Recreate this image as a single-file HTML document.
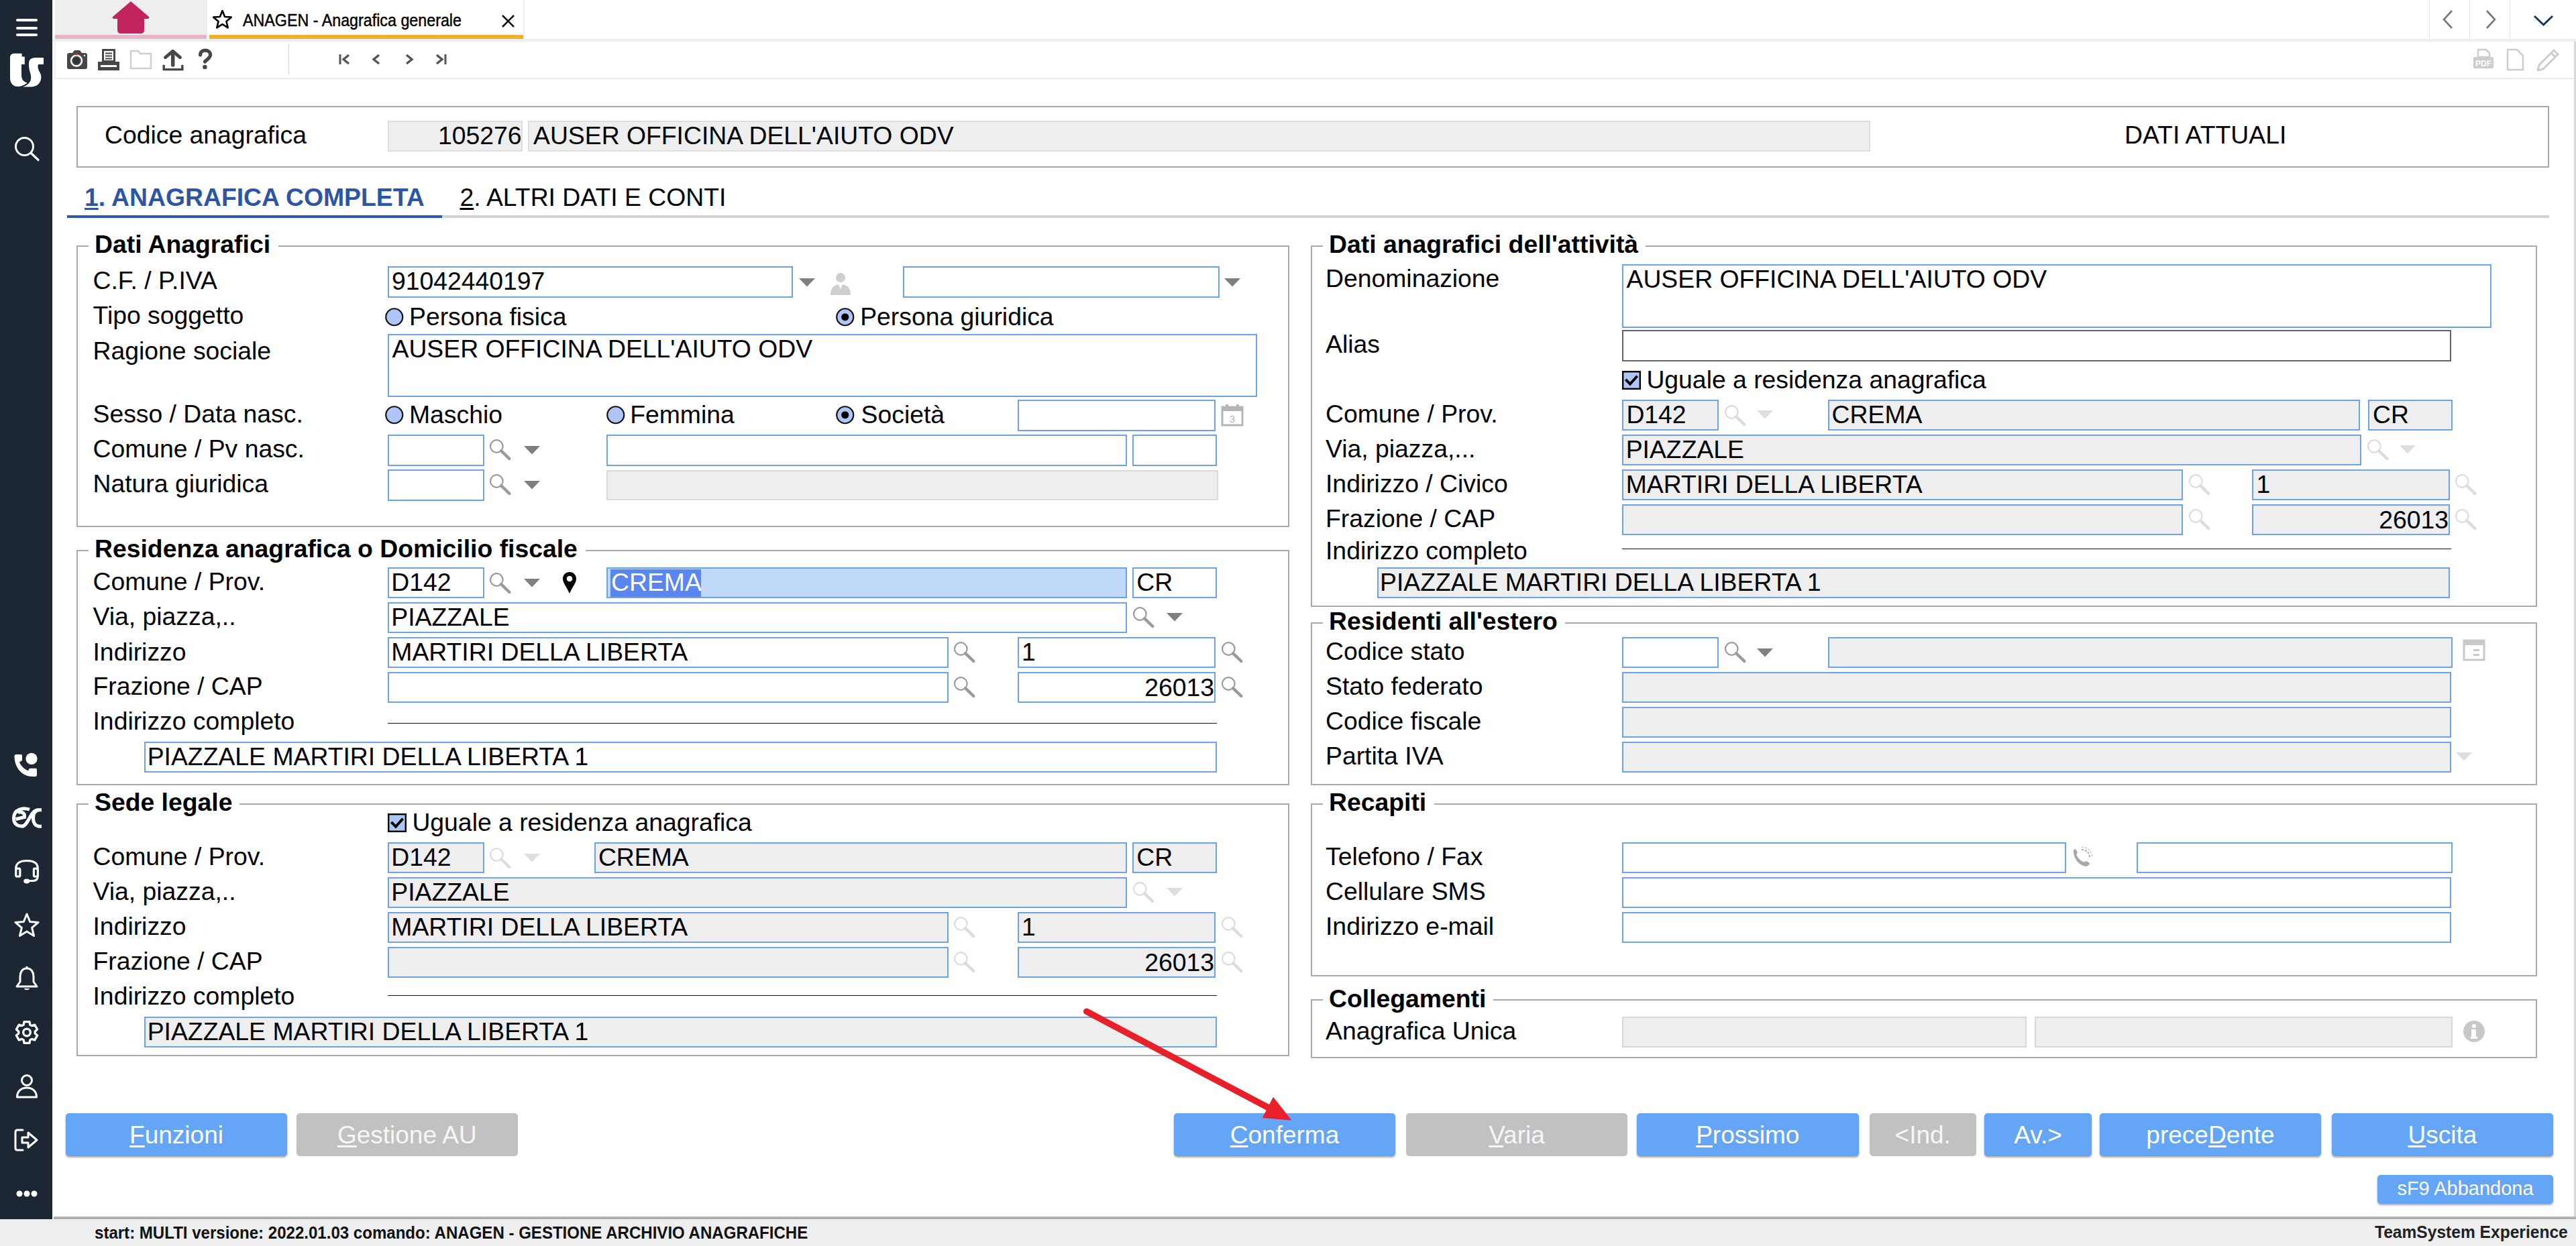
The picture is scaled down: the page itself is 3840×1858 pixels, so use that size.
<!DOCTYPE html>
<html><head><meta charset="utf-8"><title>ANAGEN - Anagrafica generale</title>
<style>
html,body{margin:0;padding:0;}
body{width:3840px;height:1858px;position:relative;overflow:hidden;background:#fff;font-family:"Liberation Sans",sans-serif;}
body>div,body>svg{position:absolute;}
.t{white-space:pre;}
</style></head><body>
<div style="left:0px;top:0px;width:78px;height:1818px;background:#1d2734"></div>
<div style="left:24px;top:28px;width:32px;height:4px;background:#fff;border-radius:2px"></div>
<div style="left:24px;top:39.5px;width:32px;height:4.0px;background:#fff;border-radius:2px"></div>
<div style="left:24px;top:50px;width:32px;height:4px;background:#fff;border-radius:2px"></div>
<svg style="left:10px;top:72px;width:60px;height:64px" viewBox="0 0 60 64"><path d="M 5,14 C 5,9.5 7.5,7.7 12,7.7 L 22.6,7.7 L 22.6,12.5 L 26.8,12.5 L 26.8,24 L 22,24 L 22,40 C 22,46 25,50 30.5,51.5 C 27,55 21,57 16,57 C 9,57 5,51 5,44 Z" fill="#fff"/><path d="M 33,22.5 C 33,16 37.5,14 44,14 L 55,14 L 55,24 L 47,24 C 46,27.5 46.5,31 49.5,36 C 52,41 52,45 50,49.5 C 47,55.5 42,57.5 35,57.5 L 24,57.5 C 30,55.5 35,52 36,46 C 37,41 35,37 33.8,32 C 33,28 33,25.5 33,22.5 Z" fill="#fff"/></svg>
<svg style="left:20px;top:201px;width:40px;height:40px" viewBox="0 0 40 40"><circle cx="16.5" cy="17.5" r="13" fill="none" stroke="#fff" stroke-width="3"/><line x1="26" y1="27" x2="37" y2="37.5" stroke="#fff" stroke-width="3.2" stroke-linecap="round"/></svg>
<svg style="left:18px;top:1122px;width:40px;height:40px" viewBox="0 0 40 40"><path d="M 3.5,5.5 C 3.5,4 4.5,3 6,3 L 13,3 C 14.2,3 15,3.8 15,5 L 15,11 C 15,12 14.4,12.6 13.5,13 L 11,14.2 C 13,20 18,25 24,27.2 L 25.2,25 C 25.6,24.2 26.2,23.8 27.2,23.8 L 35,23.8 C 36.2,23.8 37,24.6 37,25.8 L 37,33.5 C 37,35 36,36 34.5,36 L 31,36 C 15,36 3.5,23 3.5,5.5 Z" fill="#fff"/><circle cx="29" cy="9.4" r="8.6" fill="#fff"/></svg>
<svg style="left:14px;top:1200px;width:52px;height:40px" viewBox="0 0 52 40"><g fill="none" stroke="#fff" stroke-width="5"><path d="M 30,7.2 C 20,3.5 6.5,7 6.5,20 C 6.5,29.5 13,32.5 21,32"/><path d="M 9.5,21.5 L 22.5,18.5 C 23.5,10.5 15,9.5 12.5,12.5"/><path d="M 19,32.3 C 29,30.5 31,7.8 43,7.8 L 48,7.8"/><path d="M 43,7.8 C 37,9.5 35.5,15 35.5,20 C 35.5,27 39,32.2 45,32.2 L 48,32.2"/></g></svg>
<svg style="left:14px;top:1274px;width:52px;height:52px" viewBox="0 0 52 52"><g fill="none" stroke="#fff" stroke-width="3.2"><path d="M 9.7,21 C 9.7,13 16,9.5 26,9.5 C 36,9.5 42.3,13 42.3,21"/><rect x="9.75" y="21.2" width="6.1" height="11.8" rx="1.5"/><rect x="36.4" y="21.2" width="6" height="11.8" rx="1.5"/><path d="M 42.3,32 C 42.3,37 40,39.5 35,39.5 L 27,39.5"/></g><ellipse cx="25.8" cy="40" rx="4.6" ry="3.4" fill="#fff"/></svg>
<svg style="left:20px;top:1360px;width:40px;height:40px" viewBox="0 0 40 40"><polygon points="20.00,3.00 24.70,14.53 37.12,15.44 27.61,23.47 30.58,35.56 20.00,29.00 9.42,35.56 12.39,23.47 2.88,15.44 15.30,14.53" fill="none" stroke="#fff" stroke-width="3" stroke-linejoin="round"/></svg>
<svg style="left:22px;top:1440px;width:36px;height:40px" viewBox="0 0 36 40"><path d="M18,4 C11,4 8,10 8,16 L8,24 L3,31 L33,31 L28,24 L28,16 C28,10 25,4 18,4 Z" fill="none" stroke="#fff" stroke-width="3" stroke-linejoin="round"/><path d="M14,34 C14,37 22,37 22,34 Z" fill="#fff"/><line x1="18" y1="1" x2="18" y2="4" stroke="#fff" stroke-width="3"/></svg>
<svg style="left:14px;top:1514px;width:52px;height:52px" viewBox="0 0 52 52"><polygon points="21.19,14.18 22.06,9.68 29.94,9.68 30.81,14.18 33.40,15.68 37.73,14.18 41.67,21.01 38.21,24.00 38.21,27.00 41.67,29.99 37.73,36.82 33.40,35.32 30.81,36.82 29.94,41.32 22.06,41.32 21.19,36.82 18.60,35.32 14.27,36.82 10.33,29.99 13.79,27.00 13.79,24.00 10.33,21.01 14.27,14.18 18.60,15.68" fill="none" stroke="#fff" stroke-width="3.3" stroke-linejoin="round"/><circle cx="26" cy="25.5" r="5.3" fill="none" stroke="#fff" stroke-width="3.3"/></svg>
<svg style="left:22px;top:1601px;width:36px;height:40px" viewBox="0 0 36 40"><circle cx="18" cy="10" r="7.5" fill="none" stroke="#fff" stroke-width="3"/><path d="M3.5,35 C3.5,26 10,21 18,21 C26,21 32.5,26 32.5,35 Z" fill="none" stroke="#fff" stroke-width="3" stroke-linejoin="round"/></svg>
<svg style="left:20px;top:1682px;width:40px;height:36px" viewBox="0 0 40 36"><path d="M14,3 L6,3 C4,3 3,4 3,6 L3,30 C3,32 4,33 6,33 L14,33" fill="none" stroke="#fff" stroke-width="3" stroke-linecap="round"/><path d="M13,14 L22,14 L22,7 L35,18 L22,29 L22,22 L13,22 Z" fill="none" stroke="#fff" stroke-width="3" stroke-linejoin="round"/></svg>
<svg style="left:24px;top:1775px;width:10px;height:10px" viewBox="0 0 10 10"><circle cx="5" cy="5" r="4.5" fill="#fff"/></svg>
<svg style="left:35px;top:1775px;width:10px;height:10px" viewBox="0 0 10 10"><circle cx="5" cy="5" r="4.5" fill="#fff"/></svg>
<svg style="left:46px;top:1775px;width:10px;height:10px" viewBox="0 0 10 10"><circle cx="5" cy="5" r="4.5" fill="#fff"/></svg>
<div style="left:82px;top:0px;width:227px;height:52px;background:#eeeeee"></div>
<div style="left:82px;top:52px;width:226px;height:6px;background:#e8b3c8"></div>
<svg style="left:167px;top:1px;width:56px;height:50px" viewBox="0 0 56 50"><path d="M28,1 L55,24 C56,25 55,27 53,27 L48,27 L48,44 C48,47 46,49 43,49 L13,49 C10,49 8,47 8,44 L8,27 L3,27 C1,27 0,25 1,24 Z" fill="#c3245f"/></svg>
<div style="left:312px;top:52px;width:468px;height:6px;background:#f0b12a"></div>
<svg style="left:315px;top:14px;width:34px;height:30px" viewBox="0 0 34 30"><polygon points="16.50,2.00 20.14,10.98 29.81,11.67 22.40,17.92 24.73,27.33 16.50,22.20 8.27,27.33 10.60,17.92 3.19,11.67 12.86,10.98" fill="none" stroke="#000" stroke-width="2.6" stroke-linejoin="round"/></svg>
<div class="t" style="left:362px;top:17.49px;font-size:26px;line-height:26px;font-weight:400;color:#000;transform:scaleX(0.895);transform-origin:0 0;-webkit-text-stroke:0.45px #000;">ANAGEN - Anagrafica generale</div>
<svg style="left:747px;top:21px;width:21px;height:21px" viewBox="0 0 21 21"><line x1="2" y1="2" x2="19" y2="19" stroke="#111" stroke-width="2.6"/><line x1="19" y1="2" x2="2" y2="19" stroke="#111" stroke-width="2.6"/></svg>
<div style="left:78px;top:58px;width:3762px;height:4px;background:#eeeeee"></div>
<div style="left:780px;top:0px;width:2px;height:58px;background:#efefef"></div>
<div style="left:3620.5px;top:0px;width:1.5px;height:58px;background:#e6e6e6"></div>
<div style="left:3680.5px;top:0px;width:1.5px;height:58px;background:#e6e6e6"></div>
<div style="left:3740.5px;top:0px;width:1.5px;height:58px;background:#e6e6e6"></div>
<svg style="left:3638px;top:14px;width:22px;height:30px" viewBox="0 0 22 30"><polyline points="17,2 5,15 17,28" fill="none" stroke="#777" stroke-width="2.6"/></svg>
<svg style="left:3702px;top:14px;width:22px;height:30px" viewBox="0 0 22 30"><polyline points="5,2 17,15 5,28" fill="none" stroke="#777" stroke-width="2.6"/></svg>
<svg style="left:3775px;top:20px;width:34px;height:20px" viewBox="0 0 34 20"><polyline points="3,4 16.5,17 30,4" fill="none" stroke="#1e3553" stroke-width="3"/></svg>
<div style="left:81px;top:62px;width:1.5px;height:56px;background:#f0f0f0"></div>
<div style="left:81px;top:116px;width:3756px;height:2px;background:#ececec"></div>
<div style="left:3837px;top:62px;width:3px;height:1752px;background:#d8d8d8"></div>
<svg style="left:97px;top:72px;width:35px;height:34px" viewBox="0 0 35 34"><path d="M3,10 C3,8 4,7 6,7 L11,7 L14,3 L22,3 L25,7 L30,7 C32,7 33,8 33,10 L33,28 C33,30 32,31 30,31 L6,31 C4,31 3,30 3,28 Z" fill="#474747"/><circle cx="17" cy="18.5" r="8" fill="none" stroke="#fff" stroke-width="2.5"/><circle cx="17" cy="18.5" r="5" fill="#333"/><path d="M14,8 L20,8 L17,11 Z" fill="#d33"/><circle cx="29" cy="11" r="1.2" fill="#fff"/></svg>
<svg style="left:145px;top:72px;width:35px;height:35px" viewBox="0 0 35 35"><rect x="7" y="1" width="20" height="20" fill="#474747"/><rect x="10" y="4" width="14" height="14" fill="#fff"/><rect x="12" y="6.5" width="10" height="2" fill="#474747"/><rect x="12" y="10.5" width="10" height="2" fill="#474747"/><rect x="12" y="14.5" width="10" height="2" fill="#474747"/><rect x="1" y="20" width="32" height="13" fill="#474747"/><rect x="5" y="25" width="24" height="3" fill="#fff"/></svg>
<svg style="left:193px;top:74px;width:35px;height:30px" viewBox="0 0 35 30"><path d="M2,2 L13,2 L16,6 L32,6 L32,28 L2,28 Z" fill="none" stroke="#cfcfcf" stroke-width="2.5"/></svg>
<svg style="left:241px;top:73px;width:35px;height:34px" viewBox="0 0 35 34"><g fill="none" stroke="#474747" stroke-linecap="round" stroke-linejoin="round"><polyline points="5.6,12.6 16.7,3.2 27.4,12.6" stroke-width="4.8"/><line x1="16.7" y1="5" x2="16.7" y2="24" stroke-width="5.5"/><polyline points="3.2,23.8 3.2,30.6 30.8,30.6 30.8,23.8" stroke-width="3.4" stroke-linecap="butt" stroke-linejoin="miter"/></g></svg>
<svg style="left:294px;top:72px;width:24px;height:34px" viewBox="0 0 24 34"><path d="M 4.6,9.8 C 4.6,5.2 8,3.2 11.8,3.2 C 16.2,3.2 19.6,5.8 19.6,10 C 19.6,13.6 15.8,15.8 11.4,20" fill="none" stroke="#474747" stroke-width="5.2" stroke-linecap="round"/><circle cx="11.4" cy="28" r="3.3" fill="#474747"/></svg>
<div style="left:429.5px;top:66px;width:1.5px;height:45px;background:#cfcfcf"></div>
<svg style="left:503px;top:80px;width:22px;height:18px" viewBox="0 0 22 18"><line x1="4" y1="1" x2="4" y2="16" stroke="#555" stroke-width="3"/><polyline points="17,2 9,8.5 17,15" fill="none" stroke="#555" stroke-width="3.4"/></svg>
<svg style="left:553px;top:80px;width:16px;height:18px" viewBox="0 0 16 18"><polyline points="12,2 4,8.5 12,15" fill="none" stroke="#555" stroke-width="3.4"/></svg>
<svg style="left:602px;top:80px;width:16px;height:18px" viewBox="0 0 16 18"><polyline points="4,2 12,8.5 4,15" fill="none" stroke="#555" stroke-width="3.4"/></svg>
<svg style="left:647px;top:80px;width:22px;height:18px" viewBox="0 0 22 18"><polyline points="4,2 12,8.5 4,15" fill="none" stroke="#555" stroke-width="3.4"/><line x1="17" y1="1" x2="17" y2="16" stroke="#555" stroke-width="3"/></svg>
<svg style="left:3685px;top:72px;width:35px;height:34px" viewBox="0 0 35 34"><path d="M9,2 L21,2 L26,7 L26,13 L9,13 Z" fill="none" stroke="#cdcdcd" stroke-width="2.5"/><rect x="2" y="13" width="30" height="17" rx="2" fill="#cdcdcd"/><text x="17" y="27" font-size="12" font-family="Liberation Sans" font-weight="700" text-anchor="middle" fill="#fff">PDF</text></svg>
<svg style="left:3736px;top:72px;width:28px;height:34px" viewBox="0 0 28 34"><path d="M2,2 L16,2 L25,11 L25,32 L2,32 Z" fill="none" stroke="#cdcdcd" stroke-width="2.5"/></svg>
<svg style="left:3780px;top:72px;width:36px;height:34px" viewBox="0 0 36 34"><path d="M27,3 L33,9 L11,31 L3,33 L5,25 Z" fill="none" stroke="#cdcdcd" stroke-width="3"/><line x1="23" y1="7" x2="29" y2="13" stroke="#cdcdcd" stroke-width="3"/></svg>
<div style="left:114px;top:158px;width:3686px;height:92px;box-sizing:border-box;border:2px solid #a6a6a6;"></div>
<div class="t" style="left:156px;top:183.18px;font-size:37.35px;line-height:37.35px;font-weight:400;color:#000;">Codice anagrafica</div>
<div style="left:578px;top:180px;width:201px;height:46px;box-sizing:border-box;border:2px solid #dedede;background:#eeeeee"></div>
<div class="t" style="left:577.5px;width:200px;text-align:right;top:184.18px;font-size:37.35px;line-height:37.35px;font-weight:400;color:#000;">105276</div>
<div style="left:787px;top:180px;width:2001px;height:46px;box-sizing:border-box;border:2px solid #dedede;background:#eeeeee"></div>
<div class="t" style="left:795px;top:184.18px;font-size:37.35px;line-height:37.35px;font-weight:400;color:#000;">AUSER OFFICINA DELL'AIUTO ODV</div>
<div class="t" style="left:3167px;top:183.18px;font-size:37.35px;line-height:37.35px;font-weight:400;color:#000;">DATI ATTUALI</div>
<div class="t" style="left:126px;top:275.68px;font-size:37.35px;line-height:37.35px;font-weight:700;color:#2c56a4;"><u style="text-decoration-thickness:2.5px;text-underline-offset:3px">1</u>. ANAGRAFICA COMPLETA</div>
<div class="t" style="left:685.5px;top:275.68px;font-size:37.35px;line-height:37.35px;font-weight:400;color:#000;"><u style="text-decoration-thickness:2.5px;text-underline-offset:3px">2</u>. ALTRI DATI E CONTI</div>
<div style="left:100px;top:321px;width:559px;height:4px;background:#2f58a6"></div>
<div style="left:659px;top:321px;width:3141px;height:4px;background:#d2d2d2"></div>
<div style="left:114px;top:366px;width:2px;height:419.5px;background:#a9a9a9"></div>
<div style="left:1920px;top:366px;width:2px;height:419.5px;background:#a9a9a9"></div>
<div style="left:115px;top:783.5px;width:1806px;height:2.0px;background:#a9a9a9"></div>
<div style="left:115px;top:366px;width:17px;height:2px;background:#a9a9a9"></div>
<div style="left:414.5px;top:366px;width:1506.5px;height:2px;background:#a9a9a9"></div>
<div class="t" style="left:141px;top:345.88px;font-size:37.35px;line-height:37.35px;font-weight:700;color:#000;">Dati Anagrafici</div>
<div class="t" style="left:138.5px;top:400.38px;font-size:37.35px;line-height:37.35px;font-weight:400;color:#000;">C.F. / P.IVA</div>
<div style="left:578px;top:397.25px;width:604px;height:46.75px;box-sizing:border-box;border:2px solid #6ea2e6;background:#fff;"></div>
<div class="t" style="left:584px;top:401.38px;font-size:37.35px;line-height:37.35px;font-weight:400;color:#000;">91042440197</div>
<svg style="left:1191px;top:415px;width:24px;height:13px" viewBox="0 0 24 13"><polygon points="0,0 24,0 12,12.5" fill="#7f7f7f"/></svg>
<svg style="left:1236px;top:406px;width:34px;height:35px" viewBox="0 0 34 35"><circle cx="17" cy="8" r="7" fill="#cfcfcf"/><path d="M2,34 C2,22 8,18 17,18 C26,18 32,22 32,34 Z" fill="#cfcfcf"/><path d="M14,18 L17,25 L20,18 Z" fill="#fff"/></svg>
<div style="left:1346px;top:397.25px;width:472px;height:46.75px;box-sizing:border-box;border:2px solid #6ea2e6;background:#fff;"></div>
<svg style="left:1825px;top:415px;width:24px;height:13px" viewBox="0 0 24 13"><polygon points="0,0 24,0 12,12.5" fill="#7f7f7f"/></svg>
<div class="t" style="left:138.5px;top:452.38px;font-size:37.35px;line-height:37.35px;font-weight:400;color:#000;">Tipo soggetto</div>
<svg style="left:574px;top:459px;width:28px;height:28px" viewBox="0 0 28 28"><circle cx="13.75" cy="13.75" r="12.5" fill="#aec6f6" stroke="#111" stroke-width="2.2"/></svg>
<div class="t" style="left:610px;top:453.88px;font-size:37.35px;line-height:37.35px;font-weight:400;color:#000;">Persona fisica</div>
<svg style="left:1246px;top:459px;width:28px;height:28px" viewBox="0 0 28 28"><circle cx="13.75" cy="13.75" r="12.5" fill="#aec6f6" stroke="#111" stroke-width="2.2"/><circle cx="13.75" cy="13.75" r="5.6" fill="#000"/></svg>
<div class="t" style="left:1282.2px;top:453.88px;font-size:37.35px;line-height:37.35px;font-weight:400;color:#000;">Persona giuridica</div>
<div class="t" style="left:138.5px;top:504.88px;font-size:37.35px;line-height:37.35px;font-weight:400;color:#000;">Ragione sociale</div>
<div style="left:578px;top:498.25px;width:1295.5px;height:93.75px;box-sizing:border-box;border:2px solid #6ea2e6;background:#fff;"></div>
<div class="t" style="left:584.5px;top:502.38px;font-size:37.35px;line-height:37.35px;font-weight:400;color:#000;">AUSER OFFICINA DELL'AIUTO ODV</div>
<div class="t" style="left:138.5px;top:599.38px;font-size:37.35px;line-height:37.35px;font-weight:400;color:#000;">Sesso / Data nasc.</div>
<svg style="left:574px;top:605px;width:28px;height:28px" viewBox="0 0 28 28"><circle cx="13.75" cy="13.75" r="12.5" fill="#aec6f6" stroke="#111" stroke-width="2.2"/></svg>
<div class="t" style="left:610px;top:600.38px;font-size:37.35px;line-height:37.35px;font-weight:400;color:#000;">Maschio</div>
<svg style="left:904px;top:605px;width:28px;height:28px" viewBox="0 0 28 28"><circle cx="13.75" cy="13.75" r="12.5" fill="#aec6f6" stroke="#111" stroke-width="2.2"/></svg>
<div class="t" style="left:939.2px;top:600.38px;font-size:37.35px;line-height:37.35px;font-weight:400;color:#000;">Femmina</div>
<svg style="left:1246px;top:605px;width:28px;height:28px" viewBox="0 0 28 28"><circle cx="13.75" cy="13.75" r="12.5" fill="#aec6f6" stroke="#111" stroke-width="2.2"/><circle cx="13.75" cy="13.75" r="5.6" fill="#000"/></svg>
<div class="t" style="left:1283.6px;top:600.38px;font-size:37.35px;line-height:37.35px;font-weight:400;color:#000;">Società</div>
<div style="left:1517px;top:596.25px;width:294.5px;height:46.75px;box-sizing:border-box;border:2px solid #6ea2e6;background:#fff;"></div>
<svg style="left:1820px;top:602px;width:34px;height:34px" viewBox="0 0 34 34"><rect x="2" y="5" width="30" height="27" fill="none" stroke="#b5b5b5" stroke-width="3"/><rect x="2" y="5" width="30" height="6" fill="#b5b5b5"/><rect x="7" y="1" width="4" height="7" fill="#b5b5b5"/><rect x="23" y="1" width="4" height="7" fill="#b5b5b5"/><text x="17" y="28" font-size="15" font-family="Liberation Sans" text-anchor="middle" fill="#b5b5b5">3</text></svg>
<div class="t" style="left:138.5px;top:650.88px;font-size:37.35px;line-height:37.35px;font-weight:400;color:#000;">Comune / Pv nasc.</div>
<div style="left:578px;top:647.75px;width:144px;height:46.75px;box-sizing:border-box;border:2px solid #6ea2e6;background:#fff;"></div>
<svg style="left:729px;top:654px;width:34px;height:34px" viewBox="0 0 34 34"><circle cx="11.3" cy="11.5" r="9.3" fill="none" stroke="#9a9a9a" stroke-width="2.2"/><line x1="18" y1="18.2" x2="30.3" y2="30" stroke="#9a9a9a" stroke-width="4.5" stroke-linecap="round"/></svg>
<svg style="left:781px;top:665px;width:24px;height:13px" viewBox="0 0 24 13"><polygon points="0,0 24,0 12,12.5" fill="#7f7f7f"/></svg>
<div style="left:904px;top:647.75px;width:776px;height:46.75px;box-sizing:border-box;border:2px solid #6ea2e6;background:#fff;"></div>
<div style="left:1688px;top:647.75px;width:125.5px;height:46.75px;box-sizing:border-box;border:2px solid #6ea2e6;background:#fff;"></div>
<div class="t" style="left:138.5px;top:703.38px;font-size:37.35px;line-height:37.35px;font-weight:400;color:#000;">Natura giuridica</div>
<div style="left:578px;top:699.75px;width:144px;height:46.75px;box-sizing:border-box;border:2px solid #6ea2e6;background:#fff;"></div>
<svg style="left:729px;top:706px;width:34px;height:34px" viewBox="0 0 34 34"><circle cx="11.3" cy="11.5" r="9.3" fill="none" stroke="#9a9a9a" stroke-width="2.2"/><line x1="18" y1="18.2" x2="30.3" y2="30" stroke="#9a9a9a" stroke-width="4.5" stroke-linecap="round"/></svg>
<svg style="left:781px;top:717px;width:24px;height:13px" viewBox="0 0 24 13"><polygon points="0,0 24,0 12,12.5" fill="#7f7f7f"/></svg>
<div style="left:904px;top:701px;width:912px;height:45px;box-sizing:border-box;border:2px solid #dadada;background:#eeeeee"></div>
<div style="left:114px;top:820px;width:2px;height:351px;background:#a9a9a9"></div>
<div style="left:1920px;top:820px;width:2px;height:351px;background:#a9a9a9"></div>
<div style="left:115px;top:1169px;width:1806px;height:2px;background:#a9a9a9"></div>
<div style="left:115px;top:820px;width:17px;height:2px;background:#a9a9a9"></div>
<div style="left:872.5px;top:820px;width:1048.5px;height:2px;background:#a9a9a9"></div>
<div class="t" style="left:141px;top:800.38px;font-size:37.35px;line-height:37.35px;font-weight:700;color:#000;">Residenza anagrafica o Domicilio fiscale</div>
<div class="t" style="left:138.5px;top:849.38px;font-size:37.35px;line-height:37.35px;font-weight:400;color:#000;">Comune / Prov.</div>
<div style="left:578px;top:846.25px;width:144px;height:45.75px;box-sizing:border-box;border:2px solid #6ea2e6;background:#fff;"></div>
<div class="t" style="left:583.3px;top:850.38px;font-size:37.35px;line-height:37.35px;font-weight:400;color:#000;">D142</div>
<svg style="left:729px;top:853px;width:34px;height:34px" viewBox="0 0 34 34"><circle cx="11.3" cy="11.5" r="9.3" fill="none" stroke="#9a9a9a" stroke-width="2.2"/><line x1="18" y1="18.2" x2="30.3" y2="30" stroke="#9a9a9a" stroke-width="4.5" stroke-linecap="round"/></svg>
<svg style="left:781px;top:863px;width:24px;height:13px" viewBox="0 0 24 13"><polygon points="0,0 24,0 12,12.5" fill="#7f7f7f"/></svg>
<svg style="left:838px;top:852px;width:22px;height:34px" viewBox="0 0 22 34"><path d="M11,1 C5,1 1,5.5 1,11 C1,17 6,22 11,33 C16,22 21,17 21,11 C21,5.5 17,1 11,1 Z" fill="#000"/><circle cx="11" cy="11" r="4.3" fill="#fff"/></svg>
<div style="left:904px;top:846.25px;width:776px;height:45.75px;box-sizing:border-box;border:2px solid #6ea2e6;background:#c0d9f8;"></div>
<div style="left:910px;top:849px;width:135px;height:40.5px;background:#5b86f0"></div>
<div class="t" style="left:911px;top:850.38px;font-size:37.35px;line-height:37.35px;font-weight:400;color:#fff;">CREMA</div>
<div style="left:1688px;top:846.25px;width:125.5px;height:45.75px;box-sizing:border-box;border:2px solid #6ea2e6;background:#fff;"></div>
<div class="t" style="left:1694.2px;top:850.38px;font-size:37.35px;line-height:37.35px;font-weight:400;color:#000;">CR</div>
<div class="t" style="left:138.5px;top:901.38px;font-size:37.35px;line-height:37.35px;font-weight:400;color:#000;">Via, piazza,..</div>
<div style="left:578px;top:898.25px;width:1102px;height:45.75px;box-sizing:border-box;border:2px solid #6ea2e6;background:#fff;"></div>
<div class="t" style="left:583.3px;top:902.38px;font-size:37.35px;line-height:37.35px;font-weight:400;color:#000;">PIAZZALE</div>
<svg style="left:1688px;top:904px;width:34px;height:34px" viewBox="0 0 34 34"><circle cx="11.3" cy="11.5" r="9.3" fill="none" stroke="#9a9a9a" stroke-width="2.2"/><line x1="18" y1="18.2" x2="30.3" y2="30" stroke="#9a9a9a" stroke-width="4.5" stroke-linecap="round"/></svg>
<svg style="left:1739px;top:914px;width:24px;height:13px" viewBox="0 0 24 13"><polygon points="0,0 24,0 12,12.5" fill="#7f7f7f"/></svg>
<div class="t" style="left:138.5px;top:953.88px;font-size:37.35px;line-height:37.35px;font-weight:400;color:#000;">Indirizzo</div>
<div style="left:578px;top:950.25px;width:836px;height:45.75px;box-sizing:border-box;border:2px solid #6ea2e6;background:#fff;"></div>
<div class="t" style="left:583.3px;top:954.38px;font-size:37.35px;line-height:37.35px;font-weight:400;color:#000;">MARTIRI DELLA LIBERTA</div>
<svg style="left:1421px;top:956px;width:34px;height:34px" viewBox="0 0 34 34"><circle cx="11.3" cy="11.5" r="9.3" fill="none" stroke="#9a9a9a" stroke-width="2.2"/><line x1="18" y1="18.2" x2="30.3" y2="30" stroke="#9a9a9a" stroke-width="4.5" stroke-linecap="round"/></svg>
<div style="left:1516.5px;top:950.25px;width:295.5px;height:45.75px;box-sizing:border-box;border:2px solid #6ea2e6;background:#fff;"></div>
<div class="t" style="left:1523px;top:954.38px;font-size:37.35px;line-height:37.35px;font-weight:400;color:#000;">1</div>
<svg style="left:1820px;top:956px;width:34px;height:34px" viewBox="0 0 34 34"><circle cx="11.3" cy="11.5" r="9.3" fill="none" stroke="#9a9a9a" stroke-width="2.2"/><line x1="18" y1="18.2" x2="30.3" y2="30" stroke="#9a9a9a" stroke-width="4.5" stroke-linecap="round"/></svg>
<div class="t" style="left:138.5px;top:1005.38px;font-size:37.35px;line-height:37.35px;font-weight:400;color:#000;">Frazione / CAP</div>
<div style="left:578px;top:1002.25px;width:836px;height:45.75px;box-sizing:border-box;border:2px solid #6ea2e6;background:#fff;"></div>
<svg style="left:1421px;top:1008px;width:34px;height:34px" viewBox="0 0 34 34"><circle cx="11.3" cy="11.5" r="9.3" fill="none" stroke="#9a9a9a" stroke-width="2.2"/><line x1="18" y1="18.2" x2="30.3" y2="30" stroke="#9a9a9a" stroke-width="4.5" stroke-linecap="round"/></svg>
<div style="left:1516.5px;top:1002.25px;width:295.5px;height:45.75px;box-sizing:border-box;border:2px solid #6ea2e6;background:#fff;"></div>
<div class="t" style="left:1560px;width:250px;text-align:right;top:1007.38px;font-size:37.35px;line-height:37.35px;font-weight:400;color:#000;">26013</div>
<svg style="left:1820px;top:1008px;width:34px;height:34px" viewBox="0 0 34 34"><circle cx="11.3" cy="11.5" r="9.3" fill="none" stroke="#9a9a9a" stroke-width="2.2"/><line x1="18" y1="18.2" x2="30.3" y2="30" stroke="#9a9a9a" stroke-width="4.5" stroke-linecap="round"/></svg>
<div class="t" style="left:138.5px;top:1056.88px;font-size:37.35px;line-height:37.35px;font-weight:400;color:#000;">Indirizzo completo</div>
<div style="left:578px;top:1077.5px;width:1236px;height:1.5px;background:#111"></div>
<div style="left:214.5px;top:1106.25px;width:1599.5px;height:45.75px;box-sizing:border-box;border:2px solid #6ea2e6;background:#fff;"></div>
<div class="t" style="left:219.7px;top:1110.38px;font-size:37.35px;line-height:37.35px;font-weight:400;color:#000;">PIAZZALE MARTIRI DELLA LIBERTA 1</div>
<div style="left:114px;top:1198px;width:2px;height:377px;background:#a9a9a9"></div>
<div style="left:1920px;top:1198px;width:2px;height:377px;background:#a9a9a9"></div>
<div style="left:115px;top:1573px;width:1806px;height:2px;background:#a9a9a9"></div>
<div style="left:115px;top:1198px;width:17px;height:2px;background:#a9a9a9"></div>
<div style="left:357px;top:1198px;width:1564px;height:2px;background:#a9a9a9"></div>
<div class="t" style="left:141px;top:1177.88px;font-size:37.35px;line-height:37.35px;font-weight:700;color:#000;">Sede legale</div>
<svg style="left:578px;top:1213px;width:28px;height:28px" viewBox="0 0 28 28"><rect x="1.2" y="1.2" width="25.6" height="25.6" fill="#aec6f6" stroke="#000" stroke-width="2.4"/><polyline points="5.3,12.8 12,19.6 22.6,7.7" fill="none" stroke="#000" stroke-width="3.8"/></svg>
<div class="t" style="left:614.4px;top:1208.38px;font-size:37.35px;line-height:37.35px;font-weight:400;color:#000;">Uguale a residenza anagrafica</div>
<div class="t" style="left:138.5px;top:1259.38px;font-size:37.35px;line-height:37.35px;font-weight:400;color:#000;">Comune / Prov.</div>
<div style="left:578px;top:1256.25px;width:144px;height:45.75px;box-sizing:border-box;border:2px solid #6ea2e6;background:#eeeeee;"></div>
<div class="t" style="left:583.3px;top:1260.38px;font-size:37.35px;line-height:37.35px;font-weight:400;color:#000;">D142</div>
<svg style="left:729px;top:1263px;width:34px;height:34px" viewBox="0 0 34 34"><circle cx="11.3" cy="11.5" r="9.3" fill="none" stroke="#dcdcdc" stroke-width="2.2"/><line x1="18" y1="18.2" x2="30.3" y2="30" stroke="#dcdcdc" stroke-width="4.5" stroke-linecap="round"/></svg>
<svg style="left:781px;top:1273px;width:24px;height:13px" viewBox="0 0 24 13"><polygon points="0,0 24,0 12,12.5" fill="#dedede"/></svg>
<div style="left:885.5px;top:1256.25px;width:794.5px;height:45.75px;box-sizing:border-box;border:2px solid #6ea2e6;background:#eeeeee;"></div>
<div class="t" style="left:891.9px;top:1260.38px;font-size:37.35px;line-height:37.35px;font-weight:400;color:#000;">CREMA</div>
<div style="left:1688px;top:1256.25px;width:125.5px;height:45.75px;box-sizing:border-box;border:2px solid #6ea2e6;background:#eeeeee;"></div>
<div class="t" style="left:1694.2px;top:1260.38px;font-size:37.35px;line-height:37.35px;font-weight:400;color:#000;">CR</div>
<div class="t" style="left:138.5px;top:1311.38px;font-size:37.35px;line-height:37.35px;font-weight:400;color:#000;">Via, piazza,..</div>
<div style="left:578px;top:1308.25px;width:1102px;height:45.75px;box-sizing:border-box;border:2px solid #6ea2e6;background:#eeeeee;"></div>
<div class="t" style="left:583.3px;top:1312.38px;font-size:37.35px;line-height:37.35px;font-weight:400;color:#000;">PIAZZALE</div>
<svg style="left:1688px;top:1314px;width:34px;height:34px" viewBox="0 0 34 34"><circle cx="11.3" cy="11.5" r="9.3" fill="none" stroke="#dcdcdc" stroke-width="2.2"/><line x1="18" y1="18.2" x2="30.3" y2="30" stroke="#dcdcdc" stroke-width="4.5" stroke-linecap="round"/></svg>
<svg style="left:1739px;top:1324px;width:24px;height:13px" viewBox="0 0 24 13"><polygon points="0,0 24,0 12,12.5" fill="#dedede"/></svg>
<div class="t" style="left:138.5px;top:1363.38px;font-size:37.35px;line-height:37.35px;font-weight:400;color:#000;">Indirizzo</div>
<div style="left:578px;top:1360.25px;width:836px;height:45.75px;box-sizing:border-box;border:2px solid #6ea2e6;background:#eeeeee;"></div>
<div class="t" style="left:583.3px;top:1364.38px;font-size:37.35px;line-height:37.35px;font-weight:400;color:#000;">MARTIRI DELLA LIBERTA</div>
<svg style="left:1421px;top:1366px;width:34px;height:34px" viewBox="0 0 34 34"><circle cx="11.3" cy="11.5" r="9.3" fill="none" stroke="#dcdcdc" stroke-width="2.2"/><line x1="18" y1="18.2" x2="30.3" y2="30" stroke="#dcdcdc" stroke-width="4.5" stroke-linecap="round"/></svg>
<div style="left:1516.5px;top:1360.25px;width:295.5px;height:45.75px;box-sizing:border-box;border:2px solid #6ea2e6;background:#eeeeee;"></div>
<div class="t" style="left:1523px;top:1364.38px;font-size:37.35px;line-height:37.35px;font-weight:400;color:#000;">1</div>
<svg style="left:1820px;top:1366px;width:34px;height:34px" viewBox="0 0 34 34"><circle cx="11.3" cy="11.5" r="9.3" fill="none" stroke="#dcdcdc" stroke-width="2.2"/><line x1="18" y1="18.2" x2="30.3" y2="30" stroke="#dcdcdc" stroke-width="4.5" stroke-linecap="round"/></svg>
<div class="t" style="left:138.5px;top:1415.38px;font-size:37.35px;line-height:37.35px;font-weight:400;color:#000;">Frazione / CAP</div>
<div style="left:578px;top:1411.75px;width:836px;height:45.75px;box-sizing:border-box;border:2px solid #6ea2e6;background:#eeeeee;"></div>
<svg style="left:1421px;top:1418px;width:34px;height:34px" viewBox="0 0 34 34"><circle cx="11.3" cy="11.5" r="9.3" fill="none" stroke="#dcdcdc" stroke-width="2.2"/><line x1="18" y1="18.2" x2="30.3" y2="30" stroke="#dcdcdc" stroke-width="4.5" stroke-linecap="round"/></svg>
<div style="left:1516.5px;top:1411.75px;width:295.5px;height:45.75px;box-sizing:border-box;border:2px solid #6ea2e6;background:#eeeeee;"></div>
<div class="t" style="left:1560px;width:250px;text-align:right;top:1417.38px;font-size:37.35px;line-height:37.35px;font-weight:400;color:#000;">26013</div>
<svg style="left:1820px;top:1418px;width:34px;height:34px" viewBox="0 0 34 34"><circle cx="11.3" cy="11.5" r="9.3" fill="none" stroke="#dcdcdc" stroke-width="2.2"/><line x1="18" y1="18.2" x2="30.3" y2="30" stroke="#dcdcdc" stroke-width="4.5" stroke-linecap="round"/></svg>
<div class="t" style="left:138.5px;top:1466.88px;font-size:37.35px;line-height:37.35px;font-weight:400;color:#000;">Indirizzo completo</div>
<div style="left:578px;top:1483.5px;width:1236px;height:1.5px;background:#111"></div>
<div style="left:214.5px;top:1516.25px;width:1599.5px;height:45.75px;box-sizing:border-box;border:2px solid #6ea2e6;background:#eeeeee;"></div>
<div class="t" style="left:219.7px;top:1519.88px;font-size:37.35px;line-height:37.35px;font-weight:400;color:#000;">PIAZZALE MARTIRI DELLA LIBERTA 1</div>
<div style="left:1954px;top:366px;width:2px;height:538.5px;background:#a9a9a9"></div>
<div style="left:3780px;top:366px;width:2px;height:538.5px;background:#a9a9a9"></div>
<div style="left:1955px;top:902.5px;width:1826px;height:2.0px;background:#a9a9a9"></div>
<div style="left:1955px;top:366px;width:17px;height:2px;background:#a9a9a9"></div>
<div style="left:2453px;top:366px;width:1328px;height:2px;background:#a9a9a9"></div>
<div class="t" style="left:1981px;top:345.88px;font-size:37.35px;line-height:37.35px;font-weight:700;color:#000;">Dati anagrafici dell'attività</div>
<div class="t" style="left:1976px;top:397.38px;font-size:37.35px;line-height:37.35px;font-weight:400;color:#000;">Denominazione</div>
<div style="left:2418px;top:393.75px;width:1295.5px;height:94.75px;box-sizing:border-box;border:2px solid #6ea2e6;background:#fff;"></div>
<div class="t" style="left:2424.5px;top:397.88px;font-size:37.35px;line-height:37.35px;font-weight:400;color:#000;">AUSER OFFICINA DELL'AIUTO ODV</div>
<div class="t" style="left:1976px;top:494.88px;font-size:37.35px;line-height:37.35px;font-weight:400;color:#000;">Alias</div>
<div style="left:2418px;top:491.75px;width:1236px;height:46.75px;box-sizing:border-box;border:2px solid #646464;background:#fff;"></div>
<svg style="left:2418px;top:553px;width:28px;height:28px" viewBox="0 0 28 28"><rect x="1.2" y="1.2" width="25.6" height="25.6" fill="#aec6f6" stroke="#000" stroke-width="2.4"/><polyline points="5.3,12.8 12,19.6 22.6,7.7" fill="none" stroke="#000" stroke-width="3.8"/></svg>
<div class="t" style="left:2454.4px;top:548.38px;font-size:37.35px;line-height:37.35px;font-weight:400;color:#000;">Uguale a residenza anagrafica</div>
<div class="t" style="left:1976px;top:599.38px;font-size:37.35px;line-height:37.35px;font-weight:400;color:#000;">Comune / Prov.</div>
<div style="left:2418px;top:596.25px;width:143.5px;height:45.75px;box-sizing:border-box;border:2px solid #6ea2e6;background:#eeeeee;"></div>
<div class="t" style="left:2424.4px;top:600.38px;font-size:37.35px;line-height:37.35px;font-weight:400;color:#000;">D142</div>
<svg style="left:2570px;top:603px;width:34px;height:34px" viewBox="0 0 34 34"><circle cx="11.3" cy="11.5" r="9.3" fill="none" stroke="#dcdcdc" stroke-width="2.2"/><line x1="18" y1="18.2" x2="30.3" y2="30" stroke="#dcdcdc" stroke-width="4.5" stroke-linecap="round"/></svg>
<svg style="left:2619px;top:612px;width:24px;height:13px" viewBox="0 0 24 13"><polygon points="0,0 24,0 12,12.5" fill="#dedede"/></svg>
<div style="left:2724.5px;top:596.25px;width:793.5px;height:45.75px;box-sizing:border-box;border:2px solid #6ea2e6;background:#eeeeee;"></div>
<div class="t" style="left:2730.6px;top:600.38px;font-size:37.35px;line-height:37.35px;font-weight:400;color:#000;">CREMA</div>
<div style="left:3530px;top:596.25px;width:126px;height:45.75px;box-sizing:border-box;border:2px solid #6ea2e6;background:#eeeeee;"></div>
<div class="t" style="left:3537px;top:600.38px;font-size:37.35px;line-height:37.35px;font-weight:400;color:#000;">CR</div>
<div class="t" style="left:1976px;top:651.38px;font-size:37.35px;line-height:37.35px;font-weight:400;color:#000;">Via, piazza,...</div>
<div style="left:2418px;top:647.75px;width:1101.5px;height:46.25px;box-sizing:border-box;border:2px solid #6ea2e6;background:#eeeeee;"></div>
<div class="t" style="left:2423.7px;top:652.38px;font-size:37.35px;line-height:37.35px;font-weight:400;color:#000;">PIAZZALE</div>
<svg style="left:3528px;top:654px;width:34px;height:34px" viewBox="0 0 34 34"><circle cx="11.3" cy="11.5" r="9.3" fill="none" stroke="#dcdcdc" stroke-width="2.2"/><line x1="18" y1="18.2" x2="30.3" y2="30" stroke="#dcdcdc" stroke-width="4.5" stroke-linecap="round"/></svg>
<svg style="left:3577px;top:664px;width:24px;height:13px" viewBox="0 0 24 13"><polygon points="0,0 24,0 12,12.5" fill="#dedede"/></svg>
<div class="t" style="left:1976px;top:703.38px;font-size:37.35px;line-height:37.35px;font-weight:400;color:#000;">Indirizzo / Civico</div>
<div style="left:2418px;top:699.75px;width:835.5px;height:46.25px;box-sizing:border-box;border:2px solid #6ea2e6;background:#eeeeee;"></div>
<div class="t" style="left:2423.7px;top:704.38px;font-size:37.35px;line-height:37.35px;font-weight:400;color:#000;">MARTIRI DELLA LIBERTA</div>
<svg style="left:3262px;top:706px;width:34px;height:34px" viewBox="0 0 34 34"><circle cx="11.3" cy="11.5" r="9.3" fill="none" stroke="#dcdcdc" stroke-width="2.2"/><line x1="18" y1="18.2" x2="30.3" y2="30" stroke="#dcdcdc" stroke-width="4.5" stroke-linecap="round"/></svg>
<div style="left:3356.5px;top:699.75px;width:295.5px;height:46.25px;box-sizing:border-box;border:2px solid #6ea2e6;background:#eeeeee;"></div>
<div class="t" style="left:3363.6px;top:704.38px;font-size:37.35px;line-height:37.35px;font-weight:400;color:#000;">1</div>
<svg style="left:3659px;top:706px;width:34px;height:34px" viewBox="0 0 34 34"><circle cx="11.3" cy="11.5" r="9.3" fill="none" stroke="#dcdcdc" stroke-width="2.2"/><line x1="18" y1="18.2" x2="30.3" y2="30" stroke="#dcdcdc" stroke-width="4.5" stroke-linecap="round"/></svg>
<div class="t" style="left:1976px;top:755.38px;font-size:37.35px;line-height:37.35px;font-weight:400;color:#000;">Frazione / CAP</div>
<div style="left:2418px;top:751.75px;width:835.5px;height:46.25px;box-sizing:border-box;border:2px solid #6ea2e6;background:#eeeeee;"></div>
<svg style="left:3262px;top:758px;width:34px;height:34px" viewBox="0 0 34 34"><circle cx="11.3" cy="11.5" r="9.3" fill="none" stroke="#dcdcdc" stroke-width="2.2"/><line x1="18" y1="18.2" x2="30.3" y2="30" stroke="#dcdcdc" stroke-width="4.5" stroke-linecap="round"/></svg>
<div style="left:3356.5px;top:751.75px;width:295.5px;height:46.25px;box-sizing:border-box;border:2px solid #6ea2e6;background:#eeeeee;"></div>
<div class="t" style="left:3400px;width:250px;text-align:right;top:757.38px;font-size:37.35px;line-height:37.35px;font-weight:400;color:#000;">26013</div>
<svg style="left:3659px;top:758px;width:34px;height:34px" viewBox="0 0 34 34"><circle cx="11.3" cy="11.5" r="9.3" fill="none" stroke="#dcdcdc" stroke-width="2.2"/><line x1="18" y1="18.2" x2="30.3" y2="30" stroke="#dcdcdc" stroke-width="4.5" stroke-linecap="round"/></svg>
<div class="t" style="left:1976px;top:802.88px;font-size:37.35px;line-height:37.35px;font-weight:400;color:#000;">Indirizzo completo</div>
<div style="left:2418px;top:817.5px;width:1236px;height:1.5px;background:#111"></div>
<div style="left:2052.5px;top:846.25px;width:1599.5px;height:45.75px;box-sizing:border-box;border:2px solid #6ea2e6;background:#eeeeee;"></div>
<div class="t" style="left:2057px;top:849.88px;font-size:37.35px;line-height:37.35px;font-weight:400;color:#000;">PIAZZALE MARTIRI DELLA LIBERTA 1</div>
<div style="left:1954px;top:928px;width:2px;height:243px;background:#a9a9a9"></div>
<div style="left:3780px;top:928px;width:2px;height:243px;background:#a9a9a9"></div>
<div style="left:1955px;top:1169px;width:1826px;height:2px;background:#a9a9a9"></div>
<div style="left:1955px;top:928px;width:17px;height:2px;background:#a9a9a9"></div>
<div style="left:2333px;top:928px;width:1448px;height:2px;background:#a9a9a9"></div>
<div class="t" style="left:1981px;top:908.38px;font-size:37.35px;line-height:37.35px;font-weight:700;color:#000;">Residenti all'estero</div>
<div class="t" style="left:1976px;top:953.38px;font-size:37.35px;line-height:37.35px;font-weight:400;color:#000;">Codice stato</div>
<div style="left:2418px;top:950.25px;width:143.5px;height:45.25px;box-sizing:border-box;border:2px solid #6ea2e6;background:#fff;"></div>
<svg style="left:2570px;top:956px;width:34px;height:34px" viewBox="0 0 34 34"><circle cx="11.3" cy="11.5" r="9.3" fill="none" stroke="#9a9a9a" stroke-width="2.2"/><line x1="18" y1="18.2" x2="30.3" y2="30" stroke="#9a9a9a" stroke-width="4.5" stroke-linecap="round"/></svg>
<svg style="left:2619px;top:967px;width:24px;height:13px" viewBox="0 0 24 13"><polygon points="0,0 24,0 12,12.5" fill="#7f7f7f"/></svg>
<div style="left:2724.5px;top:950.25px;width:931.5px;height:45.75px;box-sizing:border-box;border:2px solid #6ea2e6;background:#eeeeee;"></div>
<svg style="left:3670px;top:952px;width:36px;height:36px" viewBox="0 0 36 36"><rect x="3" y="3" width="30" height="29" fill="none" stroke="#c8c8c8" stroke-width="3"/><rect x="3" y="3" width="30" height="7" fill="#c8c8c8"/><rect x="17" y="16" width="9" height="3" fill="#c8c8c8"/><rect x="17" y="23" width="9" height="3" fill="#c8c8c8"/></svg>
<div class="t" style="left:1976px;top:1005.38px;font-size:37.35px;line-height:37.35px;font-weight:400;color:#000;">Stato federato</div>
<div style="left:2418px;top:1002.25px;width:1236px;height:45.75px;box-sizing:border-box;border:2px solid #6ea2e6;background:#eeeeee;"></div>
<div class="t" style="left:1976px;top:1057.38px;font-size:37.35px;line-height:37.35px;font-weight:400;color:#000;">Codice fiscale</div>
<div style="left:2418px;top:1054.25px;width:1236px;height:45.75px;box-sizing:border-box;border:2px solid #6ea2e6;background:#eeeeee;"></div>
<div class="t" style="left:1976px;top:1109.38px;font-size:37.35px;line-height:37.35px;font-weight:400;color:#000;">Partita IVA</div>
<div style="left:2418px;top:1106.25px;width:1236px;height:45.75px;box-sizing:border-box;border:2px solid #6ea2e6;background:#eeeeee;"></div>
<svg style="left:3661px;top:1122px;width:24px;height:13px" viewBox="0 0 24 13"><polygon points="0,0 24,0 12,12.5" fill="#dedede"/></svg>
<div style="left:1954px;top:1198px;width:2px;height:258px;background:#a9a9a9"></div>
<div style="left:3780px;top:1198px;width:2px;height:258px;background:#a9a9a9"></div>
<div style="left:1955px;top:1454px;width:1826px;height:2px;background:#a9a9a9"></div>
<div style="left:1955px;top:1198px;width:17px;height:2px;background:#a9a9a9"></div>
<div style="left:2137.5px;top:1198px;width:1643.5px;height:2px;background:#a9a9a9"></div>
<div class="t" style="left:1981px;top:1177.88px;font-size:37.35px;line-height:37.35px;font-weight:700;color:#000;">Recapiti</div>
<div class="t" style="left:1976px;top:1259.38px;font-size:37.35px;line-height:37.35px;font-weight:400;color:#000;">Telefono / Fax</div>
<div style="left:2418px;top:1256.25px;width:662px;height:45.75px;box-sizing:border-box;border:2px solid #6ea2e6;background:#fff;"></div>
<svg style="left:3085px;top:1261px;width:36px;height:36px" viewBox="0 0 36 36"><path d="M6,10 C5,7 7,5 9,5 L12,10 C11,12 10,13 11,15 C13,19 16,22 20,24 C22,25 23,24 25,23 L30,26 C30,28 28,30 25,31 C15,30 7,21 6,10 Z" fill="#a8a8a8"/><path d="M18,6 C25,6 30,11 30,18" fill="none" stroke="#a8a8a8" stroke-width="2" stroke-dasharray="3,2"/><path d="M18,2 C27,2 34,9 34,18" fill="none" stroke="#c8c8c8" stroke-width="1.5" stroke-dasharray="3,2"/></svg>
<div style="left:3184.5px;top:1256.25px;width:471.5px;height:45.75px;box-sizing:border-box;border:2px solid #6ea2e6;background:#fff;"></div>
<div class="t" style="left:1976px;top:1311.38px;font-size:37.35px;line-height:37.35px;font-weight:400;color:#000;">Cellulare SMS</div>
<div style="left:2418px;top:1308.25px;width:1236px;height:45.75px;box-sizing:border-box;border:2px solid #6ea2e6;background:#fff;"></div>
<div class="t" style="left:1976px;top:1363.38px;font-size:37.35px;line-height:37.35px;font-weight:400;color:#000;">Indirizzo e-mail</div>
<div style="left:2418px;top:1360.25px;width:1236px;height:45.75px;box-sizing:border-box;border:2px solid #6ea2e6;background:#fff;"></div>
<div style="left:1954px;top:1490px;width:2px;height:88px;background:#a9a9a9"></div>
<div style="left:3780px;top:1490px;width:2px;height:88px;background:#a9a9a9"></div>
<div style="left:1955px;top:1576px;width:1826px;height:2px;background:#a9a9a9"></div>
<div style="left:1955px;top:1490px;width:17px;height:2px;background:#a9a9a9"></div>
<div style="left:2226px;top:1490px;width:1555px;height:2px;background:#a9a9a9"></div>
<div class="t" style="left:1981px;top:1471.38px;font-size:37.35px;line-height:37.35px;font-weight:700;color:#000;">Collegamenti</div>
<div class="t" style="left:1976px;top:1519.38px;font-size:37.35px;line-height:37.35px;font-weight:400;color:#000;">Anagrafica Unica</div>
<div style="left:2418px;top:1516px;width:603px;height:45.5px;box-sizing:border-box;border:2px solid #d8d8d8;background:#eeeeee"></div>
<div style="left:3033px;top:1516px;width:623px;height:45.5px;box-sizing:border-box;border:2px solid #d8d8d8;background:#eeeeee"></div>
<svg style="left:3671px;top:1521px;width:34px;height:34px" viewBox="0 0 34 34"><circle cx="17" cy="17" r="16" fill="#c8c8c8"/><circle cx="17" cy="9" r="3" fill="#fff"/><rect x="13" y="14" width="7" height="13" fill="#fff"/><rect x="12" y="25" width="10" height="3" fill="#fff"/></svg>
<div style="left:98px;top:1660px;width:330px;height:64px;background:#64a5f6;border-radius:5px;box-shadow:0 2px 3px rgba(0,0,0,0.35);"></div>
<div class="t" style="left:98.0px;width:330px;text-align:center;top:1673.98px;font-size:37px;line-height:37px;font-weight:400;color:#ffffff;"><u style="text-decoration-thickness:2.6px;text-underline-offset:3px">F</u>unzioni</div>
<div style="left:442px;top:1660px;width:329.5px;height:64px;background:#c1c1c1;border-radius:5px;"></div>
<div class="t" style="left:442.0px;width:329.5px;text-align:center;top:1673.98px;font-size:37px;line-height:37px;font-weight:400;color:#f6f6f6;"><u style="text-decoration-thickness:2.6px;text-underline-offset:3px">G</u>estione AU</div>
<div style="left:1750px;top:1660px;width:330px;height:64px;background:#64a5f6;border-radius:5px;box-shadow:0 2px 3px rgba(0,0,0,0.35);"></div>
<div class="t" style="left:1750.0px;width:330px;text-align:center;top:1673.98px;font-size:37px;line-height:37px;font-weight:400;color:#ffffff;"><u style="text-decoration-thickness:2.6px;text-underline-offset:3px">C</u>onferma</div>
<div style="left:2096px;top:1660px;width:330px;height:64px;background:#c1c1c1;border-radius:5px;"></div>
<div class="t" style="left:2096.0px;width:330px;text-align:center;top:1673.98px;font-size:37px;line-height:37px;font-weight:400;color:#f6f6f6;"><u style="text-decoration-thickness:2.6px;text-underline-offset:3px">V</u>aria</div>
<div style="left:2440px;top:1660px;width:330.5px;height:64px;background:#64a5f6;border-radius:5px;box-shadow:0 2px 3px rgba(0,0,0,0.35);"></div>
<div class="t" style="left:2440.0px;width:330.5px;text-align:center;top:1673.98px;font-size:37px;line-height:37px;font-weight:400;color:#ffffff;"><u style="text-decoration-thickness:2.6px;text-underline-offset:3px">P</u>rossimo</div>
<div style="left:2786.5px;top:1660px;width:159.5px;height:64px;background:#c1c1c1;border-radius:5px;"></div>
<div class="t" style="left:2786.5px;width:159.5px;text-align:center;top:1673.98px;font-size:37px;line-height:37px;font-weight:400;color:#f6f6f6;">&lt;Ind.</div>
<div style="left:2958px;top:1660px;width:160px;height:64px;background:#64a5f6;border-radius:5px;box-shadow:0 2px 3px rgba(0,0,0,0.35);"></div>
<div class="t" style="left:2958.0px;width:160px;text-align:center;top:1673.98px;font-size:37px;line-height:37px;font-weight:400;color:#ffffff;">Av.&gt;</div>
<div style="left:3130px;top:1660px;width:330px;height:64px;background:#64a5f6;border-radius:5px;box-shadow:0 2px 3px rgba(0,0,0,0.35);"></div>
<div class="t" style="left:3130.0px;width:330px;text-align:center;top:1673.98px;font-size:37px;line-height:37px;font-weight:400;color:#ffffff;">prece<u style="text-decoration-thickness:2.6px;text-underline-offset:3px">D</u>ente</div>
<div style="left:3476px;top:1660px;width:330px;height:64px;background:#64a5f6;border-radius:5px;box-shadow:0 2px 3px rgba(0,0,0,0.35);"></div>
<div class="t" style="left:3476.0px;width:330px;text-align:center;top:1673.98px;font-size:37px;line-height:37px;font-weight:400;color:#ffffff;"><u style="text-decoration-thickness:2.6px;text-underline-offset:3px">U</u>scita</div>
<div style="left:3544px;top:1752px;width:262px;height:42.5px;background:#64a5f6;border-radius:5px;box-shadow:0 2px 3px rgba(0,0,0,0.35);"></div>
<div class="t" style="left:3544.0px;width:262px;text-align:center;top:1758.45px;font-size:29px;line-height:29px;font-weight:400;color:#ffffff;">sF9 Abbandona</div>
<svg style="left:1600px;top:1490px;width:340px;height:200px" viewBox="0 0 340 200"><line x1="19.7" y1="18.3" x2="296" y2="164.5" stroke="#e8202a" stroke-width="9.5" stroke-linecap="round"/><polygon points="324.5,180 298,146.5 282.5,176.5" fill="#e8202a" stroke="#e8202a" stroke-width="1" stroke-linejoin="round"/></svg>
<div style="left:80px;top:1813.5px;width:3760px;height:4.5px;background:linear-gradient(#b9b9b9,#a9a9a9)"></div>
<div style="left:0px;top:1818px;width:3840px;height:40px;background:#eeeeee"></div>
<div class="t" style="left:141px;top:1824.99px;font-size:26px;line-height:26px;font-weight:700;color:#111;transform:scaleX(0.925);transform-origin:0 0;">start: MULTI versione: 2022.01.03 comando: ANAGEN - GESTIONE ARCHIVIO ANAGRAFICHE</div>
<div class="t" style="left:3540px;top:1824.49px;font-size:26px;line-height:26px;font-weight:700;color:#222;transform:scaleX(0.945);transform-origin:0 0;">TeamSystem Experience</div>
</body></html>
